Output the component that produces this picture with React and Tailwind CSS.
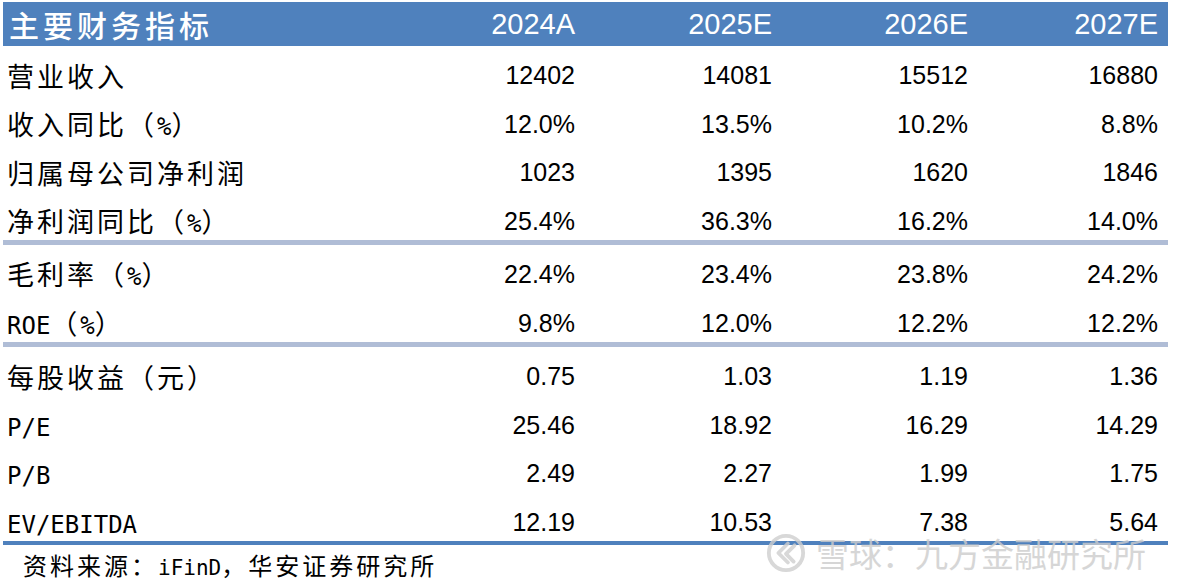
const years = ['2024A', '2025E', '2026E', '2027E']

const groups = [
  [
    ['营业收入', '12402', '14081', '15512', '16880'],
    ['收入同比（%）', '12.0%', '13.5%', '10.2%', '8.8%'],
    ['归属母公司净利润', '1023', '1395', '1620', '1846'],
    ['净利润同比（%）', '25.4%', '36.3%', '16.2%', '14.0%'],
  ],
  [
    ['毛利率（%）', '22.4%', '23.4%', '23.8%', '24.2%'],
    ['ROE（%）', '9.8%', '12.0%', '12.2%', '12.2%'],
  ],
  [
    ['每股收益（元）', '0.75', '1.03', '1.19', '1.36'],
    ['P/E', '25.46', '18.92', '16.29', '14.29'],
    ['P/B', '2.49', '2.27', '1.99', '1.75'],
    ['EV/EBITDA', '12.19', '10.53', '7.38', '5.64'],
  ],
]

const cols = 'grid grid-cols-[385px_197px_197px_196px_190px]'

// latin bits in the labels are half-width mono in the source doc
function Label({ text, small }) {
  const parts = text.split(/([\x20-\x7E]+)/).filter(Boolean)
  return (
    <span className="tracking-[3px]">
      {parts.map((p, i) =>
        /^[\x20-\x7E]+$/.test(p)
          ? <span key={i} className={`font-['DejaVu_Sans_Mono',monospace] tracking-normal ${small ? 'text-[21px]' : 'text-[24px]'}`}>{p}</span>
          : <span key={i}>{p}</span>
      )}
    </span>
  )
}

function Row({ row }) {
  const [label, ...vals] = row
  return (
    <div className={`${cols} h-[48.5px] pt-[11px] items-center text-black`}>
      <div className="pl-[4px] text-[27px] leading-none whitespace-nowrap font-['Noto_Sans_CJK_SC',sans-serif]">
        <Label text={label} />
      </div>
      {vals.map((v, i) => (
        <div key={i} className="pr-[10px] text-right text-[25px] leading-none font-['Liberation_Sans',sans-serif]">{v}</div>
      ))}
    </div>
  )
}

function XueqiuLogo() {
  return (
    <svg width="40" height="40" viewBox="0 0 42 42" fill="none">
      <circle cx="21" cy="21" r="18" stroke="#cfcfcf" strokeWidth="4" />
      <path d="M23 11 L13 21 L23 31" stroke="#cfcfcf" strokeWidth="4" strokeLinecap="round" strokeLinejoin="round" />
      <path d="M30 13 L21 22 L29 30" stroke="#cfcfcf" strokeWidth="4" strokeLinecap="round" strokeLinejoin="round" />
    </svg>
  )
}

export default function App() {
  return (
    <div className="w-[1188px] h-[584px] bg-white overflow-hidden relative">
      <div className="pl-[3px] pt-[2px] w-[1168px]">
        <div className={`${cols} h-[44px] items-center bg-[#4f81bd] text-white`}>
          <div className="pl-[6px] text-[30px] leading-none font-medium tracking-[4px] font-['Noto_Sans_CJK_SC',sans-serif]">主要财务指标</div>
          {years.map(y => (
            <div key={y} className="pr-[10px] text-right text-[29px] leading-none font-['Liberation_Sans',sans-serif]">{y}</div>
          ))}
        </div>

        {groups.map((g, gi) => (
          <div key={gi}>
            {g.map(r => <Row key={r[0]} row={r} />)}
            {gi < groups.length - 1
              ? <div className="h-[5px] bg-[#b0bdd6]" />
              : <div className="h-[4px] bg-[#4f81bd]" />}
          </div>
        ))}

        <div className="h-[38px] pt-[4px] pl-[20px] flex items-center text-[24px] leading-none tracking-[2.5px] text-black font-['Noto_Sans_CJK_SC',sans-serif]">
          <Label text="资料来源：iFinD，华安证券研究所" small />
        </div>
      </div>

      {/* watermark */}
      <div className="absolute left-[766px] top-[533px] flex items-center gap-[10px] opacity-80 pointer-events-none">
        <XueqiuLogo />
        <span className="text-[33px] leading-none text-[#cdcdcd] font-['Noto_Sans_CJK_SC',sans-serif] whitespace-nowrap">雪球：九方金融研究所</span>
      </div>
    </div>
  )
}
